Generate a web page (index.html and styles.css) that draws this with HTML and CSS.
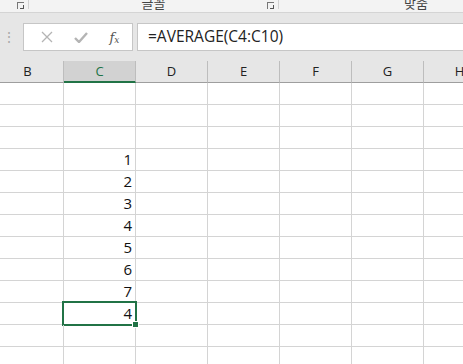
FILE: index.html
```html
<!DOCTYPE html>
<html lang="ko">
<head>
    <meta charset="UTF-8">
    <title>Excel - AVERAGE</title>
    <link rel="stylesheet" href="styles.css">
</head>
<body>

    <!-- Ribbon (bottom edge only) -->
    <div class="ribbon">
        <div class="group g-first">
            <span class="launcher"></span>
        </div>
        <div class="group g-font">
            <span class="group-name">글꼴</span>
            <span class="launcher"></span>
        </div>
        <div class="group g-align">
            <span class="group-name">맞춤</span>
        </div>
    </div>

    <!-- Formula bar -->
    <div class="formula-bar">
        <div class="grip">⋮</div>
        <div class="fx-box">
            <svg class="ico" width="12" height="12" viewBox="0 0 12 12"><path d="M1 1L11 11M11 1L1 11" stroke="#b4b4b4" stroke-width="1.3" fill="none"/></svg>
            <svg class="ico" width="14" height="11" viewBox="0 0 14 11"><path d="M1 6L5 10L13 1" stroke="#b4b4b4" stroke-width="2.4" fill="none"/></svg>
            <span class="fx">f<sub>x</sub></span>
        </div>
        <div class="formula">=AVERAGE(C4:C10)</div>
    </div>

    <!-- Sheet -->
    <div class="sheet">
        <div class="row head">
            <div class="cell">B</div>
            <div class="cell active">C</div>
            <div class="cell">D</div>
            <div class="cell">E</div>
            <div class="cell">F</div>
            <div class="cell">G</div>
            <div class="cell">H</div>
        </div>
        <div id="rows"></div>
    </div>

    <script>
        const values = [null, null, null, 1, 2, 3, 4, 5, 6, 7, 4, null, null];
        const rows = document.getElementById('rows');
        values.forEach((v, i) => {
            const row = document.createElement('div');
            row.className = 'row';
            for (let c = 0; c < 7; c++) {
                const cell = document.createElement('div');
                cell.className = 'cell';
                if (c === 1 && v !== null) cell.textContent = v;
                if (c === 1 && i === 10) cell.classList.add('selected');
                row.appendChild(cell);
            }
            rows.appendChild(row);
        });
    </script>

</body>
</html>
```

FILE: styles.css
```css
*, *::before, *::after {
    box-sizing: border-box;
    margin: 0;
    padding: 0;
}
body {
    width: 463px;
    height: 364px;
    overflow: hidden;
    background-color: #ffffff;
    font-family: 'Segoe UI', 'Open Sans', 'Noto Sans CJK KR', sans-serif;
    color: #222;
}
.ribbon {
    height: 13px;
    display: flex;
    background-color: #f3f3f3;
    border-bottom: 1px solid #d4d4d4;
    overflow: hidden;
}
.group {
    position: relative;
    height: 9px;
    border-right: 1px solid #d2d2d2;
}
.g-first {
    width: 29px;
}
.g-font {
    width: 250px;
}
.g-align {
    flex-grow: 1;
    border-right: none;
}
.group-name {
    display: block;
    text-align: center;
    font-family: 'Noto Sans CJK KR', sans-serif;
    font-size: 13px;
    line-height: 13px;
    margin-top: -4px;
    color: #444;
}
.g-align .group-name {
    text-align: right;
    padding-right: 35px;
}
.launcher {
    position: absolute;
    right: 4px;
    top: 2px;
    width: 7px;
    height: 7px;
    border-left: 1px solid #777;
    border-top: 1px solid #777;
}
.launcher::after {
    content: '';
    position: absolute;
    right: 0;
    bottom: 0;
    width: 4px;
    height: 4px;
    border-right: 1px solid #555;
    border-bottom: 1px solid #555;
}
.formula-bar {
    height: 48px;
    display: flex;
    align-items: flex-start;
    padding-top: 10px;
    background-color: #e6e6e6;
}
.grip {
    width: 23px;
    height: 28px;
    padding-right: 6px;
    line-height: 28px;
    text-align: center;
    font-size: 14px;
    color: #aaa;
}
.fx-box {
    width: 110px;
    height: 28px;
    display: flex;
    align-items: center;
    justify-content: space-around;
    padding: 0 2px 0 6px;
    background-color: #fff;
    border: 1px solid #c6c6c6;
}
.fx {
    font-family: 'DejaVu Serif', 'Liberation Serif', serif;
    font-style: italic;
    font-size: 13px;
    color: #555;
}
.fx sub {
    font-size: 9px;
    vertical-align: -1px;
}
.formula {
    flex-grow: 1;
    height: 28px;
    margin-left: 4px;
    padding-left: 10px;
    line-height: 25px;
    font-size: 15.5px;
    color: #222;
    background-color: #fff;
    border: 1px solid #c6c6c6;
    border-right: none;
}
.sheet {
    margin-left: -8px;
    font-family: 'Open Sans', 'Liberation Sans', sans-serif;
}
.row {
    display: flex;
    height: 22px;
}
.cell {
    position: relative;
    width: 72px;
    flex-shrink: 0;
    height: 22px;
    border-right: 1px solid #d4d4d4;
    border-bottom: 1px solid #d4d4d4;
    text-align: right;
    padding-right: 3px;
    font-size: 15px;
    line-height: 20px;
    color: #111;
}
.head .cell {
    background-color: #e6e6e6;
    border-right: 1px solid #bdbdbd;
    border-bottom: 1px solid #9e9e9e;
    text-align: center;
    padding-right: 0;
    font-size: 13px;
    line-height: 21px;
    color: #222;
}
.head .cell.active {
    background-color: #d2d2d2;
    border-bottom: 2px solid #217346;
    color: #217346;
}
.selected::after {
    content: '';
    position: absolute;
    left: -2px;
    top: -2px;
    width: 75px;
    height: 25px;
    border: 2px solid #217346;
}
.selected::before {
    content: '';
    position: absolute;
    left: 68px;
    top: 18px;
    width: 7px;
    height: 7px;
    background-color: #217346;
    border: 1px solid #fff;
    z-index: 2;
}
```
